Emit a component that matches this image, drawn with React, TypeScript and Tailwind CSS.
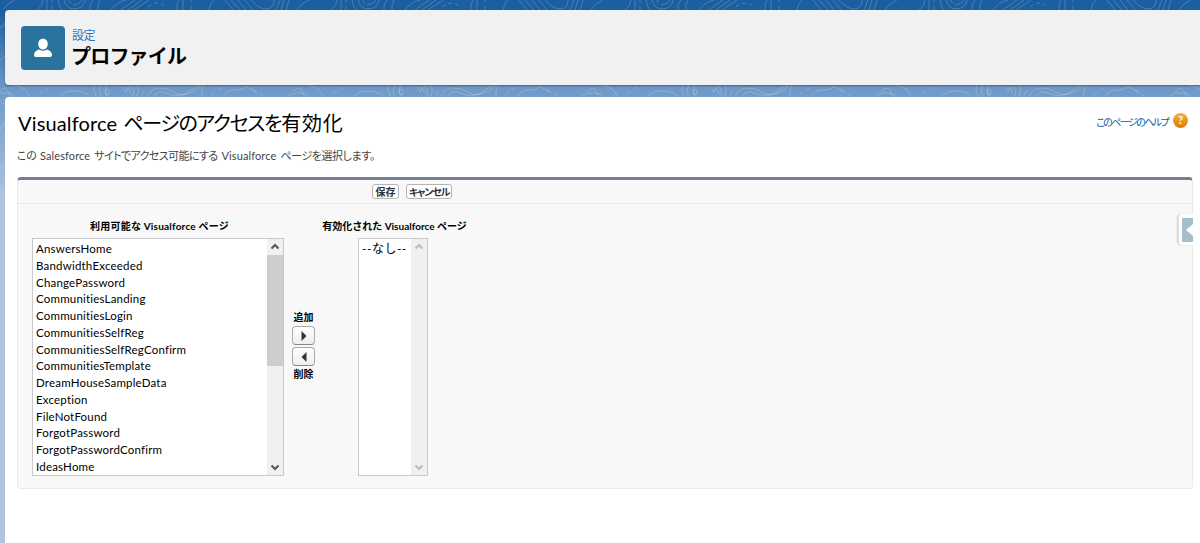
import { useState } from 'react';

const PAGES = [
  'AnswersHome',
  'BandwidthExceeded',
  'ChangePassword',
  'CommunitiesLanding',
  'CommunitiesLogin',
  'CommunitiesSelfReg',
  'CommunitiesSelfRegConfirm',
  'CommunitiesTemplate',
  'DreamHouseSampleData',
  'Exception',
  'FileNotFound',
  'ForgotPassword',
  'ForgotPasswordConfirm',
  'IdeasHome',
];

// Contour lines behind the cards, one tile repeats every 294px
function Topography() {
  return (
    <svg className="absolute inset-0 h-full w-full" fill="none">
      <defs>
        <pattern id="topo-top" x="367" width="294" height="12" patternUnits="userSpaceOnUse">
          <g stroke="#fff" strokeOpacity="0.2">
            <path d="M0 5q7-1 9-5M0 9Q11 9 12 0M17 10Q16 4 20 0M25 10Q24 5 27 0M38 10Q44 2 53 0M48 10L62 0M55 10L69 0M61 10L76 0M104 10Q103 4 106 0M110 10V0M136 10Q137 3 141 0M152 0l8 10M158 0l9 10M165 0l8 10M172 0l8 10M178 0q9 10 16 9t7-9M203 10l4-10M208 10l3-10M213 10l3-10M224 10q4-7 12-10M258 10q6-4 6-10M268 10V0M279 0q1 7 4 10M285 0q2 8 9 9" />
            <path d="M75 7q10-8 18 0M118 10V0M273 10V0M290 0q1 4 4 5" strokeDasharray="4 3" />
          </g>
        </pattern>
        <pattern id="topo-bottom" x="405" y="85" width="294" height="12" patternUnits="userSpaceOnUse">
          <g stroke="#fff" strokeOpacity="0.2">
            <path d="M12 2l3 5l2-5l3 7M20 1q4 5 2 11M26 0q3 6-1 12M36 12Q39 4 47 3t16 4t13 1T88 0M43 12q4-8 12-4t20 1t15-9M93 0q-3 6-2 12M112 12q3-7 12-7t11-4l11 7M176 12q3-4 12-4t9 4M182 7q8-9 10 2l3 3M196 0q14 2 16 12M242 12q6-7 17-6t14 6M278 0q-3 6 2 12M284 0q-4 7 1 12M290 0q-4 7 2 12" />
            <ellipse cx="290" cy="7" rx="2" ry="3" />
            <path d="M31 10l4-7M141 4l12 8M222 9l10-7M100 10l12-8" strokeDasharray="5 4" />
          </g>
        </pattern>
      </defs>
      <rect width="1200" height="10" fill="url(#topo-top)" />
      <rect y="85" width="1200" height="12" fill="url(#topo-bottom)" />
      <path d="M0 28q4-1 5-6M0 60l5-4M0 100q3 4 5 4M0 130q4-5 5-8M0 168l5-3" stroke="#fff" strokeOpacity="0.2" />
    </svg>
  );
}

function Chevron({ down, muted }: { down?: boolean; muted?: boolean }) {
  return (
    <svg viewBox="0 0 16 16" className={`h-4 w-4 ${down ? 'rotate-180' : ''} ${muted ? 'text-[#bdbdbd]' : 'text-[#555]'}`}>
      <path d="M4.500 9.500L8 6l3.500 3.500" fill="none" stroke="currentColor" strokeWidth="2" />
    </svg>
  );
}

function MoveButton({ left }: { left?: boolean }) {
  return (
    <button className="flex h-[19px] w-[23px] items-center justify-center rounded border border-[#aaa] border-b-[#888] bg-linear-to-b from-white to-[#eee]">
      <svg viewBox="0 0 6 10" className={`h-[10px] w-[6px] ${left ? 'rotate-180' : ''}`}>
        <path d="M0.500 0L5.500 5L0.500 10Z" fill="#333" />
      </svg>
    </button>
  );
}

export default function App() {
  const [selected, setSelected] = useState('');

  return (
    <div className="relative h-[543px] w-[1200px] overflow-hidden bg-[#b0c4df] font-['Lato','Noto_Sans_CJK_JP',sans-serif] text-black">
      <div className="absolute inset-x-0 top-0 h-[200px] bg-linear-to-b from-[#1a5f9f] from-5% via-[#6f99c7] via-45% to-[#b0c4df]" />
      <Topography />
      <div className="relative flex flex-col gap-3 pt-[10px] pl-[5px]">
        <header className="flex h-[75px] items-start gap-[7px] rounded-l bg-[#f1f1f1] pt-4 pl-4 shadow-[0_1px_2px_rgba(0,0,0,0.35)]">
          <div className="flex h-11 w-11 items-center justify-center rounded bg-[#2a739e]">
            <svg viewBox="0 0 20 20" className="h-5 w-5" fill="#fff">
              <ellipse cx="10" cy="6" rx="4.800" ry="5.500" />
              <path d="M6 11.500Q10 14 14 11.500Q19 13 19 17Q19 19 17 19H3Q1 19 1 17Q1 13 6 11.500Z" />
            </svg>
          </div>
          <div className="whitespace-nowrap">
            <p className="pt-px text-[12px] leading-[18px] tracking-[-0.500px] text-[#1b76c8]">設定</p>
            <h1 className="-ml-px text-[20px] leading-[22px] font-bold tracking-[-0.800px]">プロファイル</h1>
          </div>
        </header>

        <main className="h-[460px] rounded-tl bg-white pt-3 pr-[7px] pl-3">
          <div className="flex justify-between">
            <h2 className="flex gap-[6px] pl-px text-[20px] leading-7 whitespace-nowrap">
              <span className="tracking-[0.150px]">Visualforce</span>
              <span>
                <span className="tracking-[-1.300px] [font-feature-settings:'palt']">ページのアクセスを</span>
                <span className="tracking-[0.800px]">有効化</span>
              </span>
            </h2>
            <a className="flex h-[22px] items-center gap-[5px] pr-[5px] text-[10px] whitespace-nowrap text-[#015ba7]">
              <span className="pt-1 tracking-[-1.600px] [font-feature-settings:'palt']">このページのヘルプ</span>
              <span className="flex h-[15px] w-[15px] items-center justify-center rounded-full bg-linear-to-b from-[#f7b035] to-[#d97c00] text-[11px] font-bold text-white">?</span>
            </a>
          </div>
          <p className="mt-[9px] flex gap-1 text-[11px] leading-5 whitespace-nowrap text-[#444]">
            <span className="-ml-px tracking-[-1px]">この</span>
            <span className="tracking-[0.100px]">Salesforce</span>
            <span className="tracking-[-0.600px] [font-feature-settings:'palt']">サイトでアクセス可能にする</span>
            <span className="tracking-[0.100px]">Visualforce</span>
            <span className="tracking-[-0.400px] [font-feature-settings:'palt']">ページを選択します。</span>
          </p>

          <section className="relative mt-[11px] h-[312px] rounded border border-t-[3px] border-[#eaeaea] border-t-[#747e96] bg-[#f8f8f8]">
            <div className="flex h-6 items-center gap-[7px] border-b border-[#eaeaea] pl-[354px] text-[10px] font-bold text-[#333]">
              <button className="h-[15px] w-[27px] rounded-[3px] border border-[#b5b5b5] bg-white leading-3">保存</button>
              <button className="h-[15px] w-[46px] rounded-[3px] border border-[#b5b5b5] bg-white leading-3 tracking-[-1.200px] [font-feature-settings:'palt']">キャンセル</button>
            </div>
            <div className="flex pt-[12px] pl-[14px] text-[10px] font-bold whitespace-nowrap">
              <div className="w-[252px]">
                <p className="pb-[2px] pl-[3px] text-center leading-5 tracking-[0.200px]">利用可能な Visualforce ページ</p>
                <div className="flex h-[238px] border border-[#c8c8ce] bg-white">
                  <ul className="flex-1 pt-[2px] text-[11.500px] font-normal tracking-[0.200px]">
                    {PAGES.map((page) => (
                      <li key={page} onClick={() => setSelected(page)} className={`h-[16.770px] pl-[3px] leading-[16.770px] ${selected === page ? 'bg-[#cce4ff]' : ''}`}>{page}</li>
                    ))}
                  </ul>
                  <div className="flex w-4 flex-col bg-[#f0f0f0]">
                    <Chevron />
                    <div className="h-[111px] bg-[#cdcdcd]" />
                    <div className="mt-auto"><Chevron down /></div>
                  </div>
                </div>
              </div>
              <div className="flex w-[39px] flex-col items-center pt-[92px]">
                <span className="leading-[18px]">追加</span>
                <MoveButton />
                <div className="h-[2px]" />
                <MoveButton left />
                <span className="leading-4">削除</span>
              </div>
              <div className="flex w-[140px] flex-col items-center">
                <p className="pb-[2px] pl-[3px] leading-5">有効化された Visualforce ページ</p>
                <div className="flex h-[238px] w-[70px] border border-[#c8c8ce] bg-white">
                  <span className="flex-1 pl-[3px] text-[12px] leading-[20px] font-normal tracking-[0.500px]">--なし--</span>
                  <div className="flex w-4 flex-col justify-between bg-[#f0f0f0]"><Chevron muted /><Chevron down muted /></div>
                </div>
              </div>
            </div>
            {/* Collapsed help panel handle */}
            <div className="absolute top-[34px] -right-px flex h-[31px] w-[15px] items-center rounded-l border-l border-[#ddd] bg-white pl-[3px] shadow-[-1px_0_2px_rgba(0,0,0,0.15)]">
              <svg viewBox="0 0 11 24" className="h-6 w-[11px]">
                <rect width="11" height="24" fill="#a4bfcb" />
                <path d="M11 6L4 12L11 18Z" fill="#fff" />
              </svg>
            </div>
          </section>
        </main>
      </div>
    </div>
  );
}
